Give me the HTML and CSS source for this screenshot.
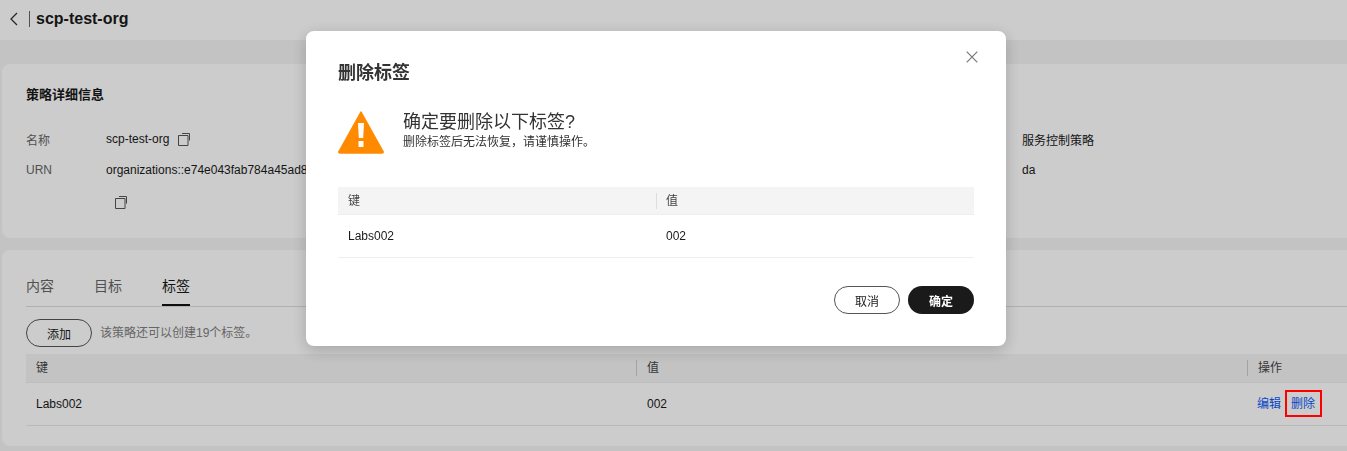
FILE: index.html
```html
<!DOCTYPE html>
<html lang="zh">
<head>
<meta charset="utf-8">
<title>scp-test-org</title>
<link rel="stylesheet" href="styles.css">
</head>
<body>
<div class="page">
  <header class="topbar">
    <svg class="back" width="10" height="14" viewBox="0 0 10 14"><path d="M8 1 2 7l6 6" fill="none" stroke="#333" stroke-width="1.3"/></svg>
    <span class="divider"></span>
    <h1 class="page-title">scp-test-org</h1>
  </header>
  <main class="content">
    <section class="card details">
      <h2 class="card-title">策略详细信息</h2>
      <div class="info-grid">
        <div class="info-col">
          <div class="info-row"><span class="label">名称</span><span class="value">scp-test-org</span>
            <svg class="copy" width="14" height="14" viewBox="0 0 14 14"><path d="M1.500 3.500h9.500v10h-9.500zM5 1.500h7.500v7" fill="none" stroke="#555" stroke-width="1"/></svg>
          </div>
          <div class="info-row urn"><span class="label">URN</span><span class="value">organizations::e74e043fab784a45ad88</span></div>
          <div class="info-row copy-row">
            <svg class="copy" width="14" height="14" viewBox="0 0 14 14"><path d="M1.500 3.500h9.500v10h-9.500zM5 1.500h7.500v7" fill="none" stroke="#555" stroke-width="1"/></svg>
          </div>
        </div>
        <div class="info-col right">
          <div class="info-row"><span class="value">服务控制策略</span></div>
          <div class="info-row"><span class="value">da</span></div>
        </div>
      </div>
    </section>
    <section class="card tags">
      <nav class="tabs">
        <span class="tab">内容</span>
        <span class="tab">目标</span>
        <span class="tab active">标签</span>
      </nav>
      <div class="toolbar">
        <button class="btn outline">添加</button>
        <span class="hint">该策略还可以创建19个标签。</span>
      </div>
      <div class="table">
        <div class="thead">
          <div class="cell key">键</div>
          <div class="cell val sep">值</div>
          <div class="cell act sep">操作</div>
        </div>
        <div class="trow">
          <div class="cell key">Labs002</div>
          <div class="cell val val-data">002</div>
          <div class="cell act links"><a class="link">编辑</a><a class="link">删除</a></div>
        </div>
      </div>
    </section>
  </main>
</div>
<div class="mask"></div>
<div class="highlight"></div>
<div class="dialog">
  <svg class="close" width="12" height="12" viewBox="0 0 12 12"><path d="M.7.700l10.600 10.600M11.300.7.700 11.300" stroke="#777" stroke-width="1.200" fill="none"/></svg>
  <h2 class="dialog-title">删除标签</h2>
  <div class="warning">
    <svg class="warn-icon" width="46" height="44" viewBox="0 0 46 44"><path d="M23 2 45 41.500a1 1 0 0 1-1 1.500H2a1 1 0 0 1-1-1.500z" fill="#ff8a00" stroke="#ff8a00" stroke-width="1.500" stroke-linejoin="round"/><path d="M20 13h6l-.8 15h-4.400z" fill="#fff"/><rect x="20.500" y="31" width="5" height="6" fill="#fff"/></svg>
    <div class="warn-text">
      <div class="warn-main">确定要删除以下标签?</div>
      <div class="warn-sub">删除标签后无法恢复，请谨慎操作。</div>
    </div>
  </div>
  <div class="dtable">
    <div class="dthead"><div class="dcell dkey">键</div><div class="dcell dsep">值</div></div>
    <div class="dtrow"><div class="dcell dkey">Labs002</div><div class="dcell">002</div></div>
  </div>
  <div class="dialog-actions">
    <button class="btn outline dark">取消</button>
    <button class="btn primary">确定</button>
  </div>
</div>
</body>
</html>
```
FILE: styles.css
```css
* { box-sizing: border-box; }
html, body { margin: 0; height: 451px; overflow: hidden; }
body { font-family: "Liberation Sans", "Noto Sans CJK SC", sans-serif; font-size: 12px; color: #252b3a; background: #f4f4f4; }
.page { width: 1347px; height: 451px; }
.topbar { height: 40px; background: #fff; display: flex; align-items: center; padding-left: 9px; }
.back { display: block; margin-top: -3px; }
.divider { width: 1px; height: 16px; background: #666; margin: -3px 6px 0 10px; }
.page-title { margin: -3px 0 0; font-size: 16px; font-weight: 700; color: #1a1a1a; }
.content { padding: 24px 0 0 2px; }
.card { background: #fff; border-radius: 8px 0 0 8px; margin-bottom: 12px; padding-left: 24px; }
.details { height: 174px; padding-top: 23px; }
.card-title { margin: 0 0 28px; font-size: 13px; line-height: 16px; font-weight: 700; color: #1a1a1a; }
.info-grid { display: flex; }
.info-col { width: 996px; }
.info-col.right { width: auto; }
.info-row { display: flex; align-items: center; height: 16px; margin-bottom: 15px; color: #1a1a1a; }
.label { width: 80px; color: #666; }
.copy { display: block; margin-left: 8px; }
.urn { margin-bottom: 16px; }
.copy-row { padding-left: 80px; }
.tags { height: 196px; padding-top: 25px; }
.tabs { display: flex; gap: 40px; height: 32px; border-bottom: 1px solid #ddd; font-size: 14px; color: #666; }
.tab { height: 31px; line-height: 20px; padding-top: 1px; }
.tab.active { color: #1a1a1a; border-bottom: 2px solid #111; }
.toolbar { display: flex; align-items: center; gap: 8px; margin-top: 12px; height: 28px; }
.btn { width: 66px; height: 28px; border-radius: 14px; font: inherit; font-size: 12px; padding: 0; background: transparent; }
.outline { border: 1px solid #555; color: #1a1a1a; }
.hint { color: #808080; margin-top: -3px; }
.table { margin-top: 7px; }
.thead { display: flex; height: 29px; background: #f4f4f4; border-bottom: 1px solid #eee; align-items: center; color: #444; }
.trow { display: flex; height: 43px; border-bottom: 1px solid #e8e8e8; align-items: center; color: #1a1a1a; }
.cell { padding-left: 10px; line-height: 16px; }
.key { width: 610px; }
.val { width: 611px; }
.val-data { padding-left: 11px; }
.act { flex: 1; }
.sep { border-left: 1px solid #ccc; }
.links { display: flex; gap: 10px; }
.link { color: #0a59f7; }
.mask { position: fixed; inset: 0; background: rgba(0, 0, 0, .2); }
.highlight { position: fixed; left: 1285px; top: 390px; width: 37px; height: 27px; border: 2px solid #f00; }
.dialog { position: fixed; left: 306px; top: 31px; width: 700px; height: 315px; background: #fff; border-radius: 8px; padding: 32px; box-shadow: 0 4px 16px rgba(0, 0, 0, .2); }
.close { position: absolute; right: 28px; top: 20px; }
.dialog-title { margin: 0; font-size: 18px; line-height: 20px; font-weight: 700; color: #333; }
.warning { display: flex; margin-top: 26px; }
.warn-icon { display: block; margin-top: 1px; }
.warn-text { margin-left: 19px; padding-top: 1px; }
.warn-main { font-size: 18px; line-height: 24px; color: #333; font-weight: 400; }
.warn-sub { font-size: 12px; line-height: 14px; margin-top: 1px; color: #333; }
.dtable { margin-top: 33px; }
.dthead { display: flex; height: 28px; align-items: center; background: #f4f4f4; border-bottom: 1px solid #eee; color: #444; }
.dtrow { display: flex; height: 43px; align-items: center; border-bottom: 1px solid #eee; color: #1a1a1a; }
.dcell { padding-left: 10px; line-height: 16px; }
.dkey { width: 318px; }
.dsep { border-left: 1px solid #ddd; padding-left: 9px; }
.dialog-actions { display: flex; justify-content: flex-end; gap: 8px; margin-top: 28px; }
.primary { background: #1a1a1a; color: #fff; border: 0; font-weight: 700; }
```
